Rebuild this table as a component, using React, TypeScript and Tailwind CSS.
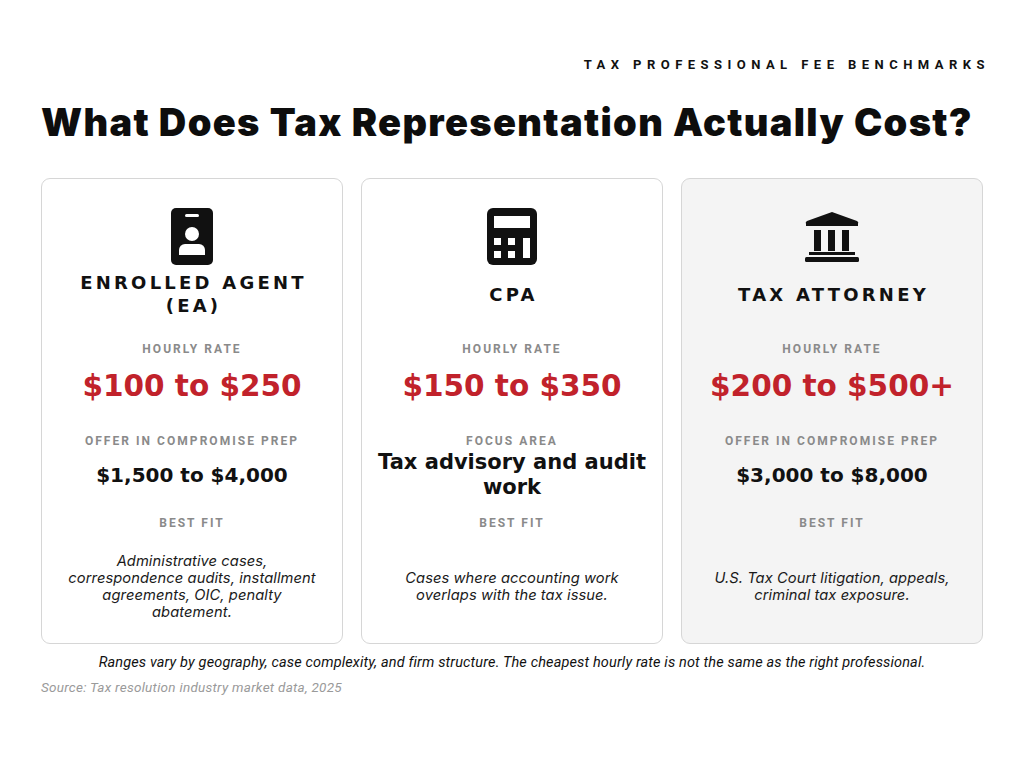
import React from "react";

const BadgeIcon = () => (
  <svg width="42" height="57" viewBox="0 0 42 57">
    <rect x="0" y="0" width="42" height="57" rx="5" fill="#111" />
    <rect x="14" y="6" width="14" height="3" rx="1.5" fill="#fff" />
    <circle cx="21" cy="26" r="7" fill="#fff" />
    <path d="M8 47 V42 a6 6 0 0 1 6 -6 h14 a6 6 0 0 1 6 6 v5 z" fill="#fff" />
  </svg>
);

const CalcIcon = () => (
  <svg width="50" height="57" viewBox="0 0 50 57">
    <rect x="0" y="0" width="50" height="57" rx="6" fill="#111" />
    <rect x="7" y="8" width="36" height="12" fill="#fff" />
    <rect x="7" y="30" width="7" height="7" fill="#fff" />
    <rect x="21" y="30" width="7" height="7" fill="#fff" />
    <rect x="7" y="43" width="7" height="7" fill="#fff" />
    <rect x="21" y="43" width="7" height="7" fill="#fff" />
    <rect x="36" y="30" width="7" height="20" fill="#fff" />
  </svg>
);

const BankIcon = () => (
  <svg width="54" height="50" viewBox="0 0 54 50">
    <path d="M27 0 L52 9 Q54 10 53 12 V14 H1 V12 Q0 10 2 9 Z" fill="#111" />
    <rect x="9" y="18" width="7" height="21" fill="#111" />
    <rect x="23" y="18" width="7" height="21" fill="#111" />
    <rect x="37" y="18" width="7" height="21" fill="#111" />
    <rect x="4" y="40" width="46" height="3" fill="#111" />
    <rect x="0" y="45" width="54" height="5" rx="1.5" fill="#111" />
  </svg>
);

const labelCls =
  "h-[16px] leading-[16px] text-[12px] font-bold tracking-[0.17em] text-[#8a8a8a] uppercase [font-family:'Roboto',sans-serif]";

type Card = {
  icon: React.ReactNode;
  title: React.ReactNode;
  rate: string;
  label2: string;
  value: string;
  valueBig?: boolean;
  desc: React.ReactNode;
  bg: string;
};

const cards: Card[] = [
  {
    icon: <BadgeIcon />,
    title: (
      <>
        ENROLLED AGENT
        <br />
        (EA)
      </>
    ),
    rate: "$100 to $250",
    label2: "Offer in Compromise Prep",
    value: "$1,500 to $4,000",
    desc: (
      <>
        Administrative cases,
        <br />
        correspondence audits, installment
        <br />
        agreements, OIC, penalty
        <br />
        abatement.
      </>
    ),
    bg: "bg-white",
  },
  {
    icon: <CalcIcon />,
    title: "CPA",
    rate: "$150 to $350",
    label2: "Focus Area",
    value: "Tax advisory and audit work",
    valueBig: true,
    desc: (
      <>
        Cases where accounting work
        <br />
        overlaps with the tax issue.
      </>
    ),
    bg: "bg-white",
  },
  {
    icon: <BankIcon />,
    title: "TAX ATTORNEY",
    rate: "$200 to $500+",
    label2: "Offer in Compromise Prep",
    value: "$3,000 to $8,000",
    desc: (
      <>
        U.S. Tax Court litigation, appeals,
        <br />
        criminal tax exposure.
      </>
    ),
    bg: "bg-[#f4f4f4]",
  },
];

export default function App() {
  return (
    <div className="w-[1024px] h-[768px] bg-white px-[41px] [font-family:'Roboto',sans-serif] text-[#111]">
      <div className="pt-[55px] flex justify-end mr-[-7px]">
        <span className="text-[13px] leading-[20px] font-bold tracking-[0.42em] text-[#111] [font-family:'Roboto',sans-serif]">
          TAX PROFESSIONAL FEE BENCHMARKS
        </span>
      </div>
      <h1 className="mt-[25px] text-[38px] leading-[44px] font-black tracking-[0.035em] [font-family:'Inter',sans-serif] text-[#0d0d0d] whitespace-nowrap">
        What Does Tax Representation Actually Cost?
      </h1>
      <div className="mt-[34px] grid grid-cols-3 gap-[18px]">
        {cards.map((c, i) => (
          <div
            key={i}
            className={`h-[466px] rounded-[9px] border border-[#d6d6d6] ${c.bg} flex flex-col items-center pt-[29px] text-center`}
          >
            <div className="h-[57px] flex items-center justify-center">{c.icon}</div>
            <div className="mt-[6px] h-[46px] flex items-center justify-center text-[18px] leading-[23px] font-bold tracking-[0.18em] [font-family:'DejaVu_Sans',sans-serif] text-[#111]">
              <div className="mr-[-3px]">{c.title}</div>
            </div>
            <div className={`mt-[24px] ${labelCls}`}>Hourly Rate</div>
            <div className="mt-[11px] h-[36px] leading-[36px] text-[29.5px] font-bold text-[#c1222b] [font-family:'DejaVu_Sans',sans-serif]">
              {c.rate}
            </div>
            <div className={`mt-[29px] ${labelCls}`}>{c.label2}</div>
            <div className="h-[51px] flex items-center justify-center px-[14px]">
              <div
                className={
                  c.valueBig
                    ? "text-[21px] leading-[25px] font-bold [font-family:'DejaVu_Sans',sans-serif] text-[#111]"
                    : "text-[20px] leading-[26px] font-bold [font-family:'DejaVu_Sans',sans-serif] text-[#111]"
                }
              >
                {c.value}
              </div>
            </div>
            <div className={`mt-[15px] ${labelCls}`}>Best Fit</div>
            <div className="mt-[11px] h-[90px] flex items-center justify-center px-[8px]">
              <p className="text-[14.7px] leading-[17px] italic tracking-[0.005em] [font-family:'Inter',sans-serif] text-[#1a1a1a] whitespace-nowrap">
                {c.desc}
              </p>
            </div>
          </div>
        ))}
      </div>
      <p className="mt-[9px] text-center text-[14.5px] leading-[20px] italic tracking-[0.01em] text-[#111] [font-family:'Roboto',sans-serif]">
        Ranges vary by geography, case complexity, and firm structure. The cheapest hourly rate is not the same as the right professional.
      </p>
      <p className="mt-[5px] text-[13.5px] leading-[18px] italic tracking-[0.02em] text-[#9a9a9a] [font-family:'Roboto',sans-serif]">
        Source: Tax resolution industry market data, 2025
      </p>
    </div>
  );
}
